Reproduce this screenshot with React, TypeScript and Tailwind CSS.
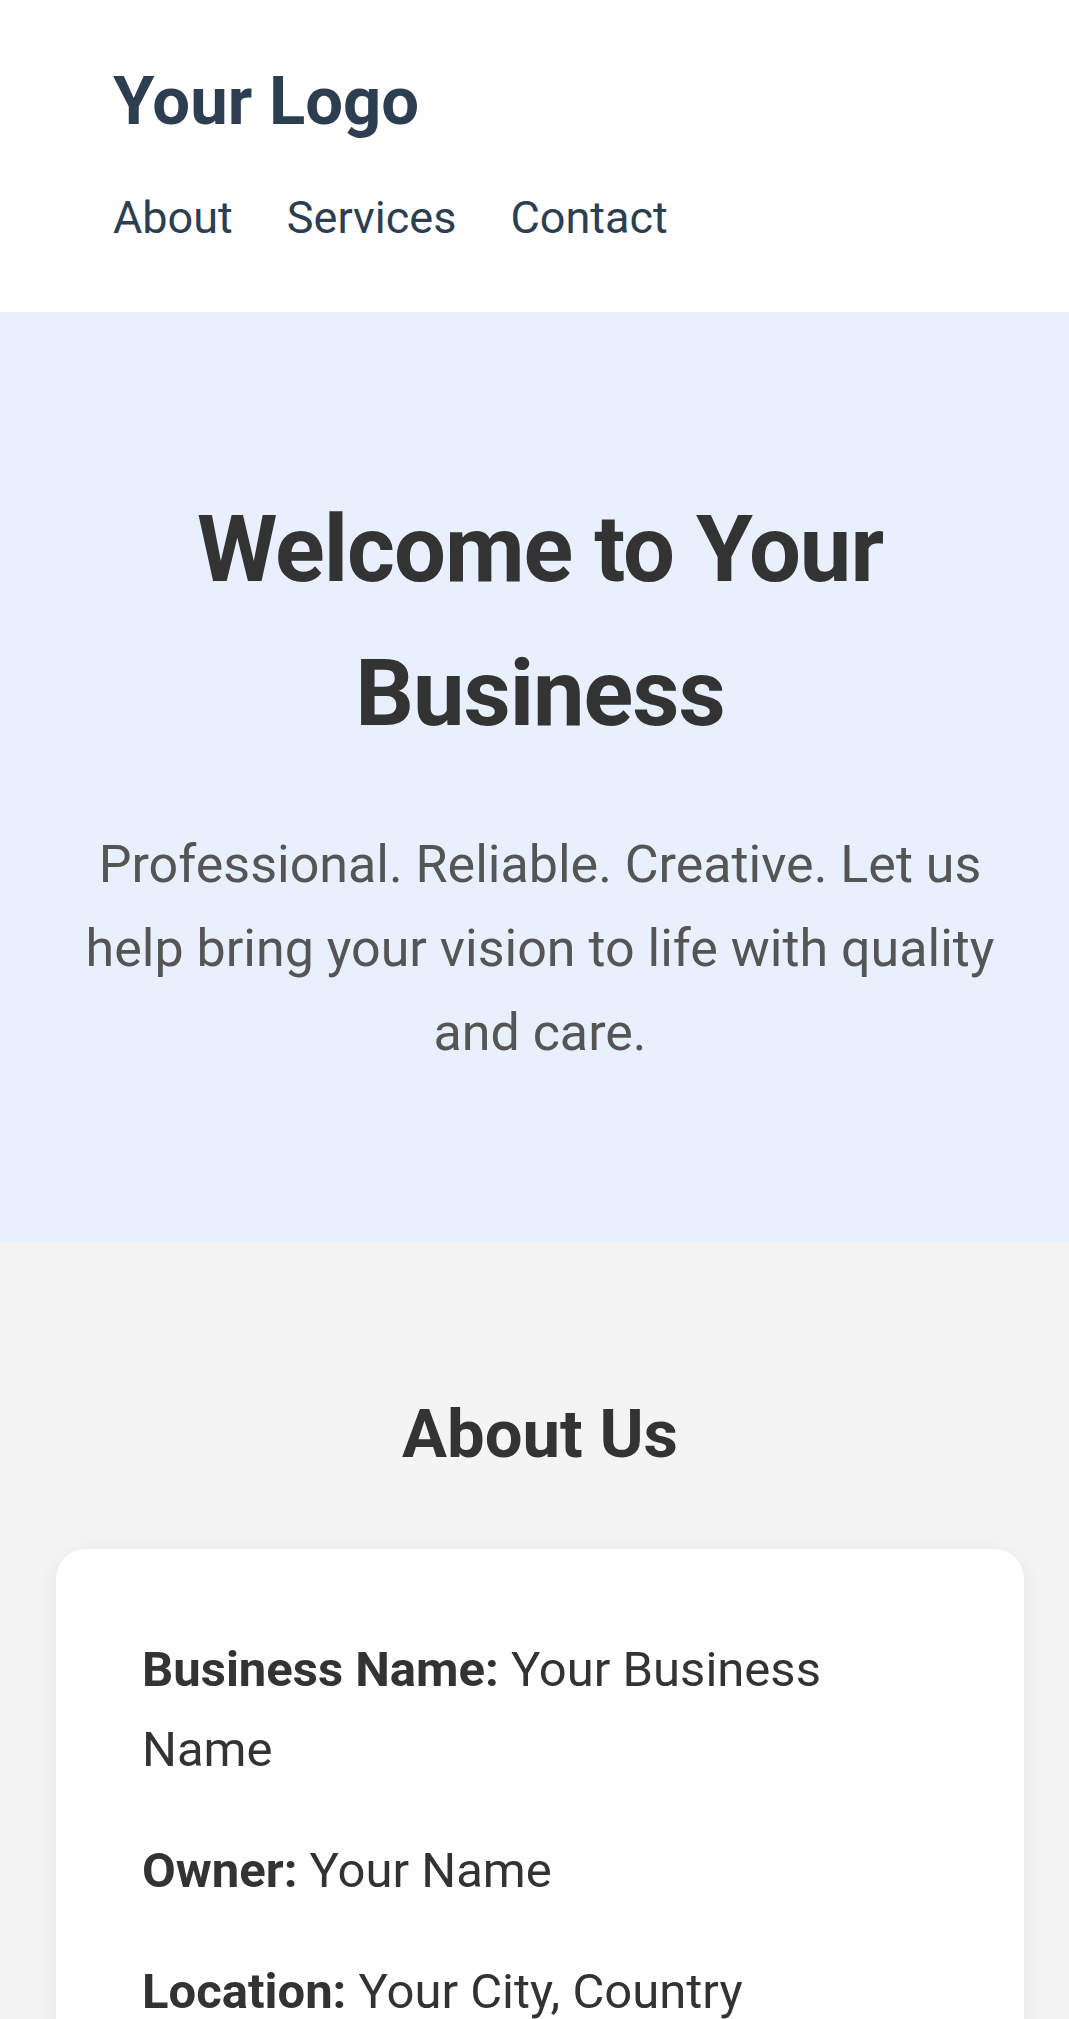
import React from "react";

export default function App() {
  return (
    <div className="w-full overflow-hidden bg-white" style={{ fontFamily: "Roboto, 'Liberation Sans', sans-serif" }}>
      <div className="w-[1080px]">
        <header className="bg-white pl-[113px] pt-[62px] pb-[69px]">
          <div className="text-[67px] leading-[78px] font-bold text-[#2c3e50]">Your Logo</div>
          <nav className="mt-[53px] flex gap-[54px] text-[45px] leading-[50px] text-[#2c3e50]">
            <a>About</a>
            <a>Services</a>
            <a>Contact</a>
          </nav>
        </header>
        <section className="bg-[#e8f0fe] px-[60px] pt-[166px] pb-[167px] text-center">
          <h1 className="text-[92px] leading-[144px] font-bold tracking-[-1px] text-[#333333]">Welcome to Your Business</h1>
          <p className="mt-[57px] text-[52px] leading-[84px] text-[#555555]">
            Professional. Reliable. Creative. Let us help bring your vision to life with quality and care.
          </p>
        </section>
        <section className="bg-[#f4f4f4] px-[56px] pt-[153px] pb-[120px]">
          <h2 className="text-center text-[67px] leading-[78px] font-bold text-[#333333]">About Us</h2>
          <div className="mt-[76px] rounded-[30px] bg-white pl-[86px] pr-[87px] pt-[81px] pb-[81px] shadow-[0_4px_24px_rgba(0,0,0,0.06)] text-[49px] leading-[80px] text-[#333333]">
            <p>
              <strong className="font-bold">Business Name:</strong> Your Business Name
            </p>
            <p className="mt-[41px]">
              <strong className="font-bold">Owner:</strong> Your Name
            </p>
            <p className="mt-[41px]">
              <strong className="font-bold">Location:</strong> Your City, Country
            </p>
            <p className="mt-[41px]">
              <strong className="font-bold">Phone:</strong> (123) 456-7890
            </p>
          </div>
        </section>
      </div>
    </div>
  );
}
